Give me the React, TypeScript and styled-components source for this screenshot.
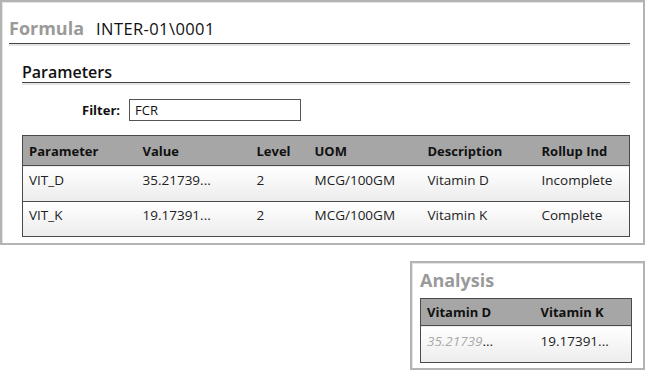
import styled, { createGlobalStyle } from 'styled-components'

const GlobalStyle = createGlobalStyle`
  html, body {
    margin: 0;
    padding: 0;
    background: #ffffff;
  }
  body {
    font-family: 'Open Sans', 'Liberation Sans', sans-serif;
    font-size: 13px;
    color: #1a1a1a;
  }
`

const Page = styled.div`
  width: 645px;
  height: 370px;
  display: flex;
  flex-direction: column;
  align-items: flex-start;
`

const Panel = styled.section<{ $width: number; $height: number }>`
  box-sizing: border-box;
  width: ${p => p.$width}px;
  height: ${p => p.$height}px;
  border: 2px solid #b3b3b3;
  box-shadow: inset 1px 1px 0 #e4e4e4;
  background: #fff;
`

const MainPanel = styled(Panel)`
  padding: 0 13px 0 7px;
`

const AnalysisPanel = styled(Panel)`
  margin: 16px 0 0 410px;
  padding: 0 12px 0 8px;
`

const TitleRow = styled.div`
  display: flex;
  align-items: baseline;
  gap: 12px;
  height: 42px;
  box-sizing: border-box;
  padding: 14px 0 0 0;
  border-bottom: 1px solid #444;
  box-shadow: 0 2px 0 #e6e6e6;
`

const TitleLabel = styled.span`
  font-size: 18px;
  font-weight: 700;
  color: #9a9a9a;
`

const TitleValue = styled.span`
  font-size: 16.5px;
  letter-spacing: 0.4px;
  color: #111;
`

const Section = styled.div`
  margin: 0 0 0 13px;
`

const SectionHeader = styled.h2`
  margin: 0;
  height: 39px;
  box-sizing: border-box;
  padding-top: 17px;
  font-size: 16px;
  font-weight: 600;
  color: #111;
  border-bottom: 1px solid #444;
  box-shadow: 0 2px 0 #e6e6e6;
`

const FilterRow = styled.div`
  display: flex;
  align-items: center;
  gap: 9px;
  margin: 16px 0 0 60px;
`

const FilterLabel = styled.label`
  font-size: 13px;
  font-weight: 700;
  color: #111;
`

const FilterInput = styled.input`
  box-sizing: border-box;
  width: 172px;
  height: 22px;
  margin: 0;
  border: 1px solid #555;
  padding: 0 5px;
  font-family: 'Open Sans', 'Liberation Sans', sans-serif;
  font-size: 13px;
  color: #111;
  outline: none;
`

const Grid = styled.table<{ $top: number; $width: number }>`
  box-sizing: border-box;
  width: ${p => p.$width}px;
  border-collapse: collapse;
  table-layout: fixed;
  margin-top: ${p => p.$top}px;
  border: 1px solid #4a4a4a;
`

const HeadCell = styled.th<{ $width: number; $height?: number }>`
  box-sizing: border-box;
  width: ${p => p.$width}px;
  height: ${p => p.$height ?? 30}px;
  padding: 0 6px;
  background: #a6a6a6;
  text-align: left;
  font-size: 13px;
  font-weight: 700;
  color: #111;
  white-space: nowrap;
  overflow: hidden;
`

const Row = styled.tr`
  background: linear-gradient(#ffffff, #ececec);
  border-top: 1px solid #4a4a4a;
`

const Cell = styled.td<{ $height?: number }>`
  box-sizing: border-box;
  height: ${p => p.$height ?? 36}px;
  padding: 0 6px 7px;
  font-size: 13.5px;
  color: #222;
  white-space: nowrap;
  overflow: hidden;
`

const Muted = styled.span`
  font-style: italic;
  color: #a8a8a8;
`

const AnalysisTitle = styled.div`
  height: 35px;
  box-sizing: border-box;
  padding-top: 5px;
  font-size: 18px;
  font-weight: 700;
  color: #9a9a9a;
`

const columns = [
  { name: 'Parameter', width: 114 },
  { name: 'Value', width: 114 },
  { name: 'Level', width: 58 },
  { name: 'UOM', width: 113 },
  { name: 'Description', width: 114 },
  { name: 'Rollup Ind', width: 94 },
]

const rows = [
  ['VIT_D', '35.21739...', '2', 'MCG/100GM', 'Vitamin D', 'Incomplete'],
  ['VIT_K', '19.17391...', '2', 'MCG/100GM', 'Vitamin K', 'Complete'],
]

const App = (): JSX.Element => {
  return (
    <Page>
      <GlobalStyle />
      <MainPanel $width={645} $height={245}>
        <TitleRow>
          <TitleLabel>Formula</TitleLabel>
          <TitleValue>INTER-01\0001</TitleValue>
        </TitleRow>
        <Section>
          <SectionHeader>Parameters</SectionHeader>
          <FilterRow>
            <FilterLabel htmlFor='filter'>Filter:</FilterLabel>
            <FilterInput id='filter' defaultValue='FCR' />
          </FilterRow>
          <Grid $top={14} $width={607}>
            <thead>
              <tr>
                {columns.map(c => (
                  <HeadCell key={c.name} $width={c.width}>{c.name}</HeadCell>
                ))}
              </tr>
            </thead>
            <tbody>
              {rows.map(r => (
                <Row key={r[0]}>
                  {r.map((v, i) => <Cell key={i} $height={35.5}>{v}</Cell>)}
                </Row>
              ))}
            </tbody>
          </Grid>
        </Section>
      </MainPanel>
      <AnalysisPanel $width={235} $height={109}>
        <AnalysisTitle>Analysis</AnalysisTitle>
        <Grid $top={0} $width={211}>
          <thead>
            <tr>
              <HeadCell $width={114} $height={27}>Vitamin D</HeadCell>
              <HeadCell $width={97} $height={27}>Vitamin K</HeadCell>
            </tr>
          </thead>
          <tbody>
            <Row>
              <Cell $height={37}><Muted>35.21739</Muted>...</Cell>
              <Cell $height={37}>19.17391...</Cell>
            </Row>
          </tbody>
        </Grid>
      </AnalysisPanel>
    </Page>
  )
}

export default App
